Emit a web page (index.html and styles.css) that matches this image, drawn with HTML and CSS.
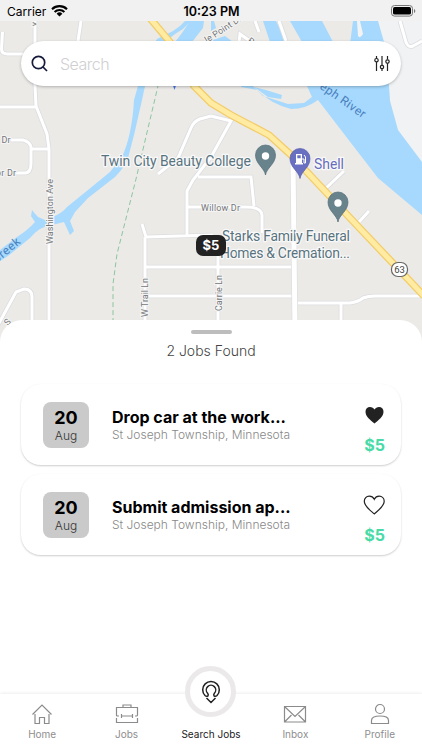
FILE: index.html
```html
<!DOCTYPE html>
<html lang="en">
<head>
    <meta charset="utf-8">
    <title>Search Jobs</title>
    <link rel="stylesheet" href="styles.css">
</head>
<body>
    <div class="app">
        <header class="status-bar">
            <div class="carrier">
                Carrier
                <svg width="17" height="12" viewBox="0 0 17 12">
                    <path d="M1 4.2a10.8 10.8 0 0 1 15 0M3.6 6.9a7.1 7.1 0 0 1 9.800 0" fill="none" stroke="#000" stroke-width="2.1"/>
                    <path d="M8.500 11.600L5.600 8.700a4.200 4.200 0 0 1 5.800 0z"/>
                </svg>
            </div>
            <div class="time">10:23 PM</div>
            <div class="battery">
                <svg width="25" height="12" viewBox="0 0 25 12">
                    <rect x=".5" y=".5" width="21" height="10.600" rx="3" fill="none" stroke="#777"/>
                    <rect x="2" y="2" width="18" height="7.600" rx="1.700"/>
                    <path d="M23 4v4q1.300-.6 1.300-2T23 4z" fill="#777"/>
                </svg>
            </div>
        </header>

        <section class="map">
            <svg class="map-canvas" width="422" height="320" viewBox="0 21 422 320">
                <defs>
                    <g id="roads">
                        <path d="M35 21v64l1 21 11 28 2 15v180"/>
                        <path d="M2.500 32l-1 17q0 5 6 5h28M0 107h36M81 21l-3 20"/>
                        <path d="M11 140h12q7 2 8 7v16q0 10-6 10h-9M31 149h18"/>
                        <path d="M-2 325l18-33 8-3q8 0 8 8v30"/>
                        <path d="M158 174l20-16 13-30q3-7 9-9l11-3M211 157l-18 23-6 11v45M198 177h53l3 29M188 207h58q15 0 16 8v18M142 224l4 13 67-2M145 237v92M146 267h149M146 296h149M218 235v95M295 303h55q8-1 13-5 5-2 12-2h47M341 303v25"/>
                        <path d="M211 116l20 5-20 36M325 189l19-18M359 222l10-11M240 42l-1 6 12 12M239 42l1-8 10 7M255 21l4 11M279 21l7 20M400 21l6 21q2 6 7 4l9-5"/>
                    </g>
                </defs>

                <rect y="21" width="422" height="320" fill="#ebeae7"/>
                <path d="M378 21h44v142l-24-32-8-30-2-20z" fill="#f0f2f4"/>

                <!-- water -->
                <g fill="#a6d9fd">
                    <path d="M144 70L138 86 134 100Q132 135 122 157L110 172 88 190 67 207Q62 213 55 216L45 220 38 217Q34 213 32 210L31 216 35 222Q28 230 17 237L0 250V261L8 256 30 238Q40 226 52 225L64 222 70 235 74 231 70 221 75 212 88 198 115 177Q124 168 128 158L134 135 142 100 145 86 150 70z"/>
                    <path d="M190 21h14l-1 7-11 14h-17l7-9z"/>
                    <path d="M154 44l3-5 16-8 7-5 5-5h6l-8 8-8 5-13 10z"/>
                    <path d="M211 21h3l2 7-5 3zM207 42l18-6 8 6z"/>
                    <path d="M263 21h13l10 21h-16zM290 21h32l11 21h-31z"/>
                    <path d="M353 21h25l6 21 5 44 1 15 8 29 24 32v53l-44-37-27-35-33-43q-12 9-27 9-20-5-34-19l-16-3V86h12l10 10 25 8 16-1 8-6-5-11 43-42z"/>
                    <path d="M254 87l12 3 16 5-1 4-13-2z"/>
                </g>
                <path d="M357 21h3l3 13q-3 5-5 2z" fill="#f3f3f3"/>

                <path class="trail" d="M164 60l-6 26-22 93-19 75-4 30v40"/>

                <use href="#roads" class="road-edge"/>
                <use href="#roads" class="road"/>
                <path d="M293 161l2 170" stroke="#dedfe1" stroke-width="6.500"/>
                <path d="M293 161l2 170" stroke="#fff" stroke-width="5"/>

                <path class="highway-edge" d="M149 17l21 25 24 44 17 17 20 12 38 20 22 20 33 35 27 29 73 77"/>
                <path class="highway" d="M149 17l21 25 24 44 17 17 20 12 38 20 22 20 33 35 27 29 73 77"/>

                <g class="street">
                    <text x="1.500" y="143">Dr</text>
                    <text x="-4" y="176" textLength="20">or Dr</text>
                    <text x="201" y="211" textLength="39">Willow Dr</text>
                    <text transform="translate(53 244) rotate(-90)" textLength="65">Washington Ave</text>
                    <text transform="translate(148 317) rotate(-90)" textLength="39">W Trail Ln</text>
                    <text transform="translate(221.500 311) rotate(-90)" textLength="36">Carrie Ln</text>
                    <text transform="translate(207 43) rotate(-33)" textLength="42">le Point Dr</text>
                    <text transform="translate(247 42) rotate(35)">R</text>
                    <text x="32" y="27">&gt;</text>
                    <text transform="translate(8 326) rotate(-50)">S</text>
                </g>
                <text class="river" transform="translate(319 88) rotate(35)" textLength="53">eph River</text>
                <text class="river" transform="translate(-4 264) rotate(-40)" textLength="33">Creek</text>

                <g class="place">
                    <text x="101" y="165.500" textLength="150">Twin City Beauty College</text>
                    <text x="222" y="241" textLength="128">Starks Family Funeral</text>
                    <text x="220" y="258" textLength="130">Homes &amp; Cremation...</text>
                    <text class="shell" x="314" y="169" textLength="30">Shell</text>
                </g>

                <!-- pins -->
                <g id="pin">
                    <path d="M265.500 175c-1-7-10-11-10-20a10 10 0 0 1 20 0c0 9-9 13-10 20z" fill="#68838c" stroke="#536d78" stroke-width=".7"/>
                    <circle cx="265.500" cy="156" r="3.700" fill="#fff"/>
                </g>
                <use href="#pin" x="72.500" y="47"/>
                <path d="M300 178.500c-1-7-10-11-10-20a10 10 0 0 1 20 0c0 9-9 13-10 20z" fill="#6970c2" stroke="#555cae" stroke-width=".7"/>
                <path d="M296 154h6v9h1v1.500h-8V163h1zm1.300 1.300v3h3.400v-3z" fill="#fff" fill-rule="evenodd"/>
                <path d="M302 159h2v4h1.500v-6l-1.500-2" fill="none" stroke="#fff"/>
                <path d="M172.500 84h4l-2 6z" fill="#4275e8"/>

                <rect x="391.500" y="262.500" width="16" height="14" rx="6.500" fill="#fff" stroke="#666" stroke-width="1.200"/>
                <text class="route" x="399.500" y="273">63</text>
            </svg>

            <div class="search">
                <svg width="18" height="18" viewBox="0 0 18 18" fill="none" stroke="#171a3a" stroke-width="1.700">
                    <circle cx="7.500" cy="7.500" r="6.200"/>
                    <path d="M12 12l4 4"/>
                </svg>
                <span>Search</span>
                <svg width="16" height="17" viewBox="0 0 16 17" fill="none" stroke="#222" stroke-width="1.200">
                    <path d="M2.500 1v2.200M2.500 7v9M8 1v9M8 14v2M13.500 1v3.500M13.500 8.500V16"/>
                    <circle cx="2.500" cy="5.200" r="1.700"/>
                    <circle cx="8" cy="12" r="1.700"/>
                    <circle cx="13.500" cy="6.600" r="1.700"/>
                </svg>
            </div>
            <div class="price-pin">$5</div>
        </section>

        <main class="sheet">
            <div class="handle"></div>
            <p class="found">2 Jobs Found</p>

            <article class="job">
                <div class="date"><b>20</b><span>Aug</span></div>
                <div class="info">
                    <h2>Drop car at the work...</h2>
                    <p>St Joseph Township, Minnesota</p>
                </div>
                <div class="side">
                    <svg width="22" height="20" viewBox="0 0 22 20">
                        <path d="M11.500 18.500C7.500 15 2.500 11.500 2.500 6.700 2.500 3.700 4.400 2 7 2 9 2 10.500 3 11.500 4.600 12.500 3 14 2 16 2 18.600 2 20.500 3.700 20.500 6.700 20.500 11.500 15.500 15 11.500 18.500z" fill="#222"/>
                    </svg>
                    <strong>$5</strong>
                </div>
            </article>

            <article class="job">
                <div class="date"><b>20</b><span>Aug</span></div>
                <div class="info">
                    <h2>Submit admission ap...</h2>
                    <p>St Joseph Township, Minnesota</p>
                </div>
                <div class="side">
                    <svg width="22" height="20" viewBox="0 0 22 20">
                        <path d="M11.300 18.900C8 16 1.300 11.500 1.300 6.300 1.300 3.200 3.400 1.200 6.200 1.200 8.500 1.200 10.300 2.300 11.300 4.300 12.300 2.300 14 1.200 16.200 1.200 19 1.200 21.200 3.200 21.200 6.300 21.200 11.500 14.500 16 11.300 18.900z" fill="none" stroke="#222" stroke-width="1.200"/>
                    </svg>
                    <strong>$5</strong>
                </div>
            </article>
        </main>

        <nav class="tabs">
            <a class="tab">
                <svg width="22" height="22" viewBox="0 0 22 22">
                    <path d="M1.500 11.500L11 2l9.500 9.500M4 11v9.500h4.500v-6h5v6H18V11"/>
                </svg>
                Home
            </a>
            <a class="tab">
                <svg width="24" height="22" viewBox="0 0 24 22">
                    <path d="M8 4.500V2h8v2.500M4 13H2.500q-1 0-1-1V4.500h21V12q0 1-1 1H20M1.500 15v4.500h21V15M6.500 13h11M6.500 11v4M17.500 11v4"/>
                </svg>
                Jobs
            </a>
            <a class="tab active">
                <div class="bubble">
                    <svg width="22" height="24" viewBox="0 0 22 24">
                        <path d="M5 15.500a8.300 8.300 0 1 1 12 0q-1.500 1.500-3 .3-.7-1.300.4-2.600a4.700 4.700 0 1 0-6.800 0q1.100 1.300.4 2.600-1.500 1.200-3-.3M6.500 18l4.500 4.500 4.500-4.500"/>
                    </svg>
                </div>
                Search Jobs
            </a>
            <a class="tab">
                <svg width="24" height="22" viewBox="0 0 24 22">
                    <path d="M1.500 3.500h21v15.500h-21zM1.500 3.500L12 13.500l10.500-10M1.500 19l7-7M22.500 19l-7-7"/>
                </svg>
                Inbox
            </a>
            <a class="tab">
                <svg width="22" height="22" viewBox="0 0 22 22">
                    <circle cx="11" cy="6" r="4.500"/>
                    <path d="M2.500 20.500v-3q0-4.500 8.500-4.500t8.500 4.500v3z"/>
                </svg>
                Profile
            </a>
        </nav>
    </div>
</body>
</html>
```

FILE: styles.css
```css
* {
    box-sizing: border-box;
}

body {
    margin: 0;
    font-family: Inter, sans-serif;
    background: #fff;
}

.app {
    width: 422px;
    height: 750px;
    display: flex;
    flex-direction: column;
    overflow: hidden;
}

.status-bar {
    height: 21px;
    flex: none;
    padding: 1px 6px 0 7px;
    display: grid;
    grid-template-columns: 1fr auto 1fr;
    align-items: center;
    background: #f1f1f1;
    font-size: 12px;
}

.carrier {
    display: flex;
    align-items: center;
    gap: 5px;
}

.time {
    font-weight: 600;
    font-size: 12.5px;
}

.battery {
    display: flex;
    justify-content: flex-end;
}

.map {
    position: relative;
    height: 299px;
    flex: none;
    padding: 20px 21px;
}

.map-canvas {
    position: absolute;
    left: 0;
    top: 0;
    font-family: Roboto, sans-serif;
}

.road-edge {
    fill: none;
    stroke: #dcdde0;
    stroke-width: 4.6;
}

.road {
    fill: none;
    stroke: #fff;
    stroke-width: 3;
}

.trail {
    fill: none;
    stroke: #8dc6a0;
    stroke-width: 1;
    stroke-dasharray: 5 3;
}

.highway-edge {
    fill: none;
    stroke: #f3cc69;
    stroke-width: 7.5;
}

.highway {
    fill: none;
    stroke: #ffeba1;
    stroke-width: 5;
}

.street {
    font-size: 9px;
    fill: #747779;
    stroke: #f5f5f5;
    stroke-width: 2px;
    paint-order: stroke;
}

.place {
    font-size: 14px;
    fill: #58737e;
    stroke: #f8f8f8;
    stroke-width: 2.5px;
    paint-order: stroke;
}

.shell {
    fill: #666dbb;
}

.river {
    font-size: 12px;
    fill: #4980bd;
}

.route {
    font-size: 9.5px;
    fill: #444;
    text-anchor: middle;
}

.search {
    position: relative;
    height: 45px;
    padding: 0 11px 0 10px;
    display: flex;
    align-items: center;
    border-radius: 23px;
    background: #fff;
    box-shadow: 0 1px 3px rgba(0, 0, 0, 0.25);
}

.search span {
    flex: 1;
    margin-left: 11px;
    font-family: "Inter Light", Inter, sans-serif;
    font-size: 16px;
    font-weight: 300;
    letter-spacing: -0.5px;
    color: #cfcfd1;
}

.price-pin {
    position: absolute;
    left: 196px;
    top: 214px;
    width: 30px;
    height: 21px;
    border-radius: 7px;
    background: #222;
    color: #fff;
    font-size: 13px;
    font-weight: 700;
    line-height: 21px;
    text-align: center;
}

.sheet {
    position: relative;
    flex: 1;
    padding: 10px 21px 0;
    border-radius: 22px 22px 0 0;
    background: #fff;
}

.handle {
    width: 41px;
    height: 4px;
    margin: 0 auto;
    border-radius: 2px;
    background: #bdbdbd;
}

.found {
    margin: 8px 0 24px;
    font-family: "Inter Light", Inter, sans-serif;
    font-size: 14px;
    font-weight: 300;
    line-height: 18px;
    text-align: center;
    color: #444;
}

.job {
    height: 81px;
    margin-bottom: 9px;
    padding: 0 16px 0 22px;
    display: flex;
    align-items: center;
    border-radius: 20px;
    background: #fff;
    box-shadow: 0 1px 2px rgba(0, 0, 0, 0.2);
}

.date {
    width: 46px;
    height: 46px;
    padding-top: 5px;
    display: flex;
    flex-direction: column;
    align-items: center;
    border-radius: 8px;
    background: #cacaca;
}

.date b {
    font-size: 18px;
    line-height: 21px;
}

.date span {
    font-family: "Inter Light", Inter, sans-serif;
    font-size: 12px;
    font-weight: 300;
    line-height: 16px;
    color: #333;
}

.info {
    flex: 1;
    margin-left: 23px;
}

.info h2 {
    margin: -1px 0 1px;
    font-size: 16px;
    font-weight: 700;
    line-height: 20px;
}

.info p {
    margin: 0;
    font-family: "Inter Light", Inter, sans-serif;
    font-size: 12px;
    font-weight: 300;
    line-height: 14px;
    color: #888;
}

.side {
    padding-top: 11px;
    display: flex;
    flex-direction: column;
    align-items: flex-end;
    gap: 10px;
}

.side strong {
    font-size: 16px;
    line-height: 20px;
    color: #48dba8;
}

.tabs {
    position: relative;
    height: 56px;
    flex: none;
    display: grid;
    grid-template-columns: repeat(5, 1fr);
    background: #fff;
    box-shadow: 0 -1px 3px rgba(0, 0, 0, 0.07);
}

.tab {
    height: 47px;
    display: flex;
    flex-direction: column;
    align-items: center;
    justify-content: flex-end;
    gap: 2px;
    font-size: 10px;
    line-height: 14px;
    color: #8e8e8e;
}

.tab svg {
    flex: none;
    fill: none;
    stroke: #8b8b8b;
    stroke-width: 1.2;
}

.tab.active {
    color: #222;
}

.tab.active svg {
    stroke: #222;
    stroke-width: 1.5;
}

.bubble {
    width: 51px;
    height: 51px;
    flex: none;
    margin-bottom: 8px;
    display: flex;
    align-items: center;
    justify-content: center;
    border: 5px solid #ebe9ea;
    border-radius: 50%;
    background: #fff;
}
```
